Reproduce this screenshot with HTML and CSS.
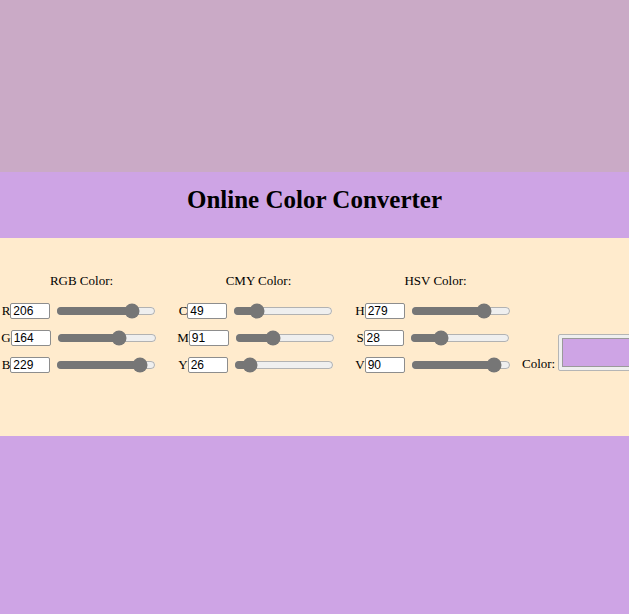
FILE: index.html
```html
<!DOCTYPE html>
<html lang="en">
<head>
<meta charset="utf-8">
<title>Online Color Converter</title>
<link rel="stylesheet" href="styles.css">
</head>
<body>
<div class="top-space"></div>
<header class="banner">
  <h1 class="title">Online Color Converter</h1>
</header>
<section class="panel">
  <div class="group">
    <div class="group-title">RGB Color:</div>
    <div class="row"><span class="lbl">R</span><input class="num" type="text" value="206"><input class="slider" type="range" min="0" max="255" value="206"></div>
    <div class="row"><span class="lbl">G</span><input class="num" type="text" value="164"><input class="slider" type="range" min="0" max="255" value="164"></div>
    <div class="row"><span class="lbl">B</span><input class="num" type="text" value="229"><input class="slider" type="range" min="0" max="255" value="229"></div>
  </div>
  <div class="group">
    <div class="group-title">CMY Color:</div>
    <div class="row"><span class="lbl">C</span><input class="num" type="text" value="49"><input class="slider" type="range" min="0" max="255" value="49"></div>
    <div class="row"><span class="lbl">M</span><input class="num" type="text" value="91"><input class="slider" type="range" min="0" max="255" value="91"></div>
    <div class="row"><span class="lbl">Y</span><input class="num" type="text" value="26"><input class="slider" type="range" min="0" max="255" value="26"></div>
  </div>
  <div class="group">
    <div class="group-title">HSV Color:</div>
    <div class="row"><span class="lbl">H</span><input class="num" type="text" value="279"><input class="slider" type="range" min="0" max="360" value="279"></div>
    <div class="row"><span class="lbl">S</span><input class="num" type="text" value="28"><input class="slider" type="range" min="0" max="100" value="28"></div>
    <div class="row"><span class="lbl">V</span><input class="num" type="text" value="90"><input class="slider" type="range" min="0" max="100" value="90"></div>
  </div>
  <div class="color-group">
    <span class="color-lbl">Color:</span>
    <div class="swatch"><div class="swatch-fill"></div></div>
  </div>
</section>
</body>
</html>
```
FILE: styles.css
```css
html, body {
  margin: 0;
  padding: 0;
}
body {
  background: #cea4e5;
  font-family: "Liberation Serif", "Times New Roman", serif;
  font-size: 13px;
  color: #000;
  overflow: hidden;
}
.top-space {
  height: 172px;
  background: #caaac6;
}
.banner {
  height: 66px;
  box-sizing: border-box;
  padding-bottom: 10px;
  display: flex;
  align-items: center;
  justify-content: center;
  background: #cea4e5;
}
.title {
  margin: 0;
  font-size: 25px;
  font-weight: bold;
}
.panel {
  height: 198px;
  box-sizing: border-box;
  padding-top: 35px;
  background: #ffebcd;
  display: flex;
  align-items: flex-start;
  gap: 17px;
  overflow: hidden;
}
.group {
  width: 160px;
  flex: none;
  display: flex;
  flex-direction: column;
  align-items: center;
}
.group-title {
  line-height: 15px;
  margin-bottom: 9px;
  padding-left: 3px;
}
.row {
  height: 27px;
  display: flex;
  align-items: center;
}
.lbl {
  line-height: 15px;
}
.num {
  box-sizing: border-box;
  width: 40px;
  height: 16px;
  margin: 0 4px 0 0;
  padding: 0 2px;
  border: 1px solid #8d8d8d;
  border-radius: 2px;
  background: #fff;
  font-family: "Liberation Sans", Arial, sans-serif;
  font-size: 12px;
  color: #000;
}
.slider {
  width: 100px;
  margin: 0 2px;
  accent-color: #767676;
}
.color-group {
  flex: none;
  display: flex;
  align-items: flex-end;
  align-self: flex-end;
  margin-left: -9px;
  margin-bottom: 65px;
}
.color-lbl {
  line-height: 15px;
  margin-right: 3px;
}
.swatch {
  width: 100px;
  height: 37px;
  box-sizing: border-box;
  border: 1px solid #b5b5b5;
  border-radius: 2px;
  background: #efefef;
  padding: 3px;
  flex: none;
}
.swatch-fill {
  height: 100%;
  box-sizing: border-box;
  border: 1px solid #9a9a9a;
  background: #cea4e5;
}
```
